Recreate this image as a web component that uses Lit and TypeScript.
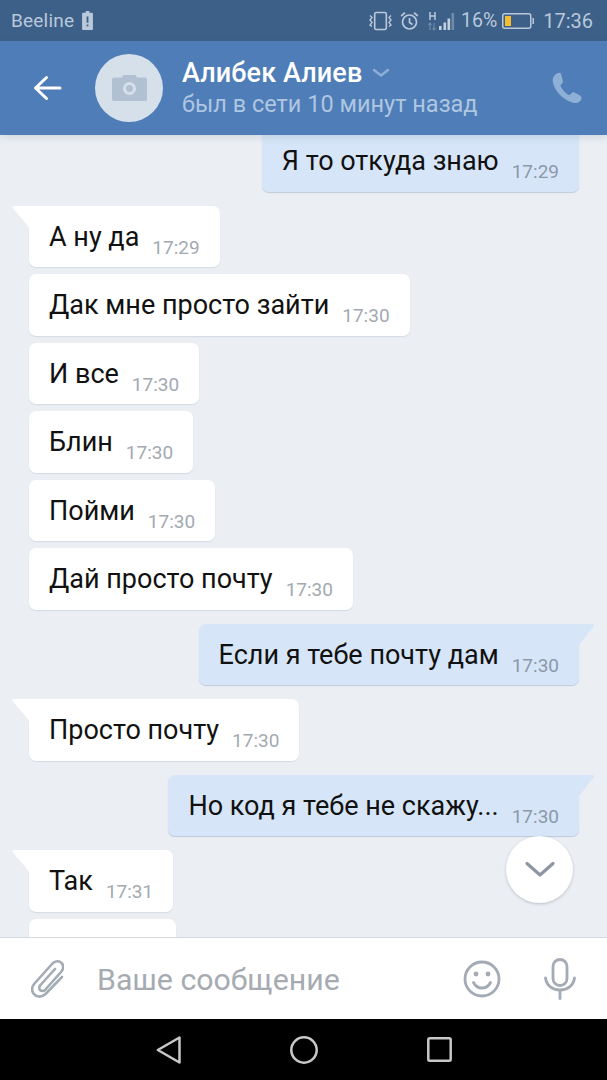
import { LitElement, html, css } from "lit";
import { customElement } from "lit/decorators.js";

type Msg = { text?: string; time?: string; out?: boolean; tail?: boolean; gap?: boolean };

const MSGS: Msg[] = [
  { text: "Я то откуда знаю", time: "17:29", out: true },
  { text: "А ну да", time: "17:29", tail: true, gap: true },
  { text: "Дак мне просто зайти", time: "17:30" },
  { text: "И все", time: "17:30" },
  { text: "Блин", time: "17:30" },
  { text: "Пойми", time: "17:30" },
  { text: "Дай просто почту", time: "17:30" },
  { text: "Если я тебе почту дам", time: "17:30", out: true, tail: true, gap: true },
  { text: "Просто почту", time: "17:30", tail: true, gap: true },
  { text: "Но код я тебе не скажу...", time: "17:30", out: true, tail: true, gap: true },
  { text: "Так", time: "17:31", tail: true, gap: true },
  {},
];

@customElement("app-root")
export class AppRoot extends LitElement {
  static styles = css`
    :host { display: block; width: 607px; height: 1080px; overflow: hidden; font-family: Roboto, "Noto Sans", sans-serif; }
    .page { display: flex; flex-direction: column; width: 607px; height: 1080px; background: #ebeff4; }
    .status { height: 41px; flex: none; background: #3d6089; color: #b9c8da; display: flex; align-items: center; padding: 0 14px 0 11px; position: relative; z-index: 2; }
    .carrier { font-size: 19px; letter-spacing: 0.2px; }
    .status svg { display: block; flex: none; }
    .warn { margin-left: 8px; }
    .spacer { flex: 1; }
    .vib { margin-right: 7px; }
    .alarm { margin-right: 8px; }
    .sig { margin-right: 5px; }
    .pct { font-size: 19.5px; margin-right: 5px; }
    .batt { margin-right: 9px; }
    .clock { font-size: 20px; }
    .header { height: 94px; flex: none; background: #4e7db7; display: flex; align-items: center; position: relative; z-index: 2; box-shadow: 0 2px 8px rgba(60, 80, 110, 0.16); }
    .back { margin-left: 33px; margin-right: 33px; display: block; flex: none; }
    .avatar { width: 68px; height: 68px; border-radius: 50%; background: #d6e0ea; display: flex; align-items: center; justify-content: center; flex: none; margin-right: 19px; }
    .who { flex: 1; min-width: 0; }
    .name { color: #fff; font-size: 27px; font-weight: 500; line-height: 30px; display: flex; align-items: center; gap: 10px; letter-spacing: 0.1px; }
    .sub { color: #afc6e2; font-size: 23.5px; line-height: 30px; margin-top: 1px; }
    .phone { margin-right: 23px; display: block; flex: none; }
    .list { flex: 1; min-height: 0; overflow: hidden; position: relative; display: flex; flex-direction: column; }
    .track { margin-top: -4.8px; display: flex; flex-direction: column; padding: 0 28px 0 29px; }
    .row { display: flex; margin-top: 7px; flex: none; }
    .row:first-child { margin-top: 0; }
    .row.gap { margin-top: 14px; }
    .row.out { justify-content: flex-end; }
    .bubble { position: relative; height: 61.5px; box-sizing: border-box; display: flex; align-items: flex-start; background: #fff; border-radius: 7px; box-shadow: 0 1px 1px rgba(90, 110, 140, 0.16); padding: 0 20px; color: #111; }
    .bubble.stub { width: 147px; }
    .out .bubble { background: #d6e6f8; box-shadow: 0 1px 1px rgba(90, 120, 160, 0.3); }
    .tail-b { border-top-left-radius: 0; }
    .out .tail-b { border-top-left-radius: 7px; border-top-right-radius: 0; }
    .text { font-size: 27px; line-height: 30px; padding-top: 16px; white-space: nowrap; }
    .time { font-size: 19px; line-height: 22px; color: #a3a9b1; margin-left: 13px; padding-top: 31px; white-space: nowrap; }
    .out .time { color: #8b99aa; }
    .tail { position: absolute; top: 0; left: -17px; display: block; }
    .out .tail { left: auto; right: -16px; }
    .fab { position: absolute; left: 506px; top: 701px; width: 67px; height: 67px; border-radius: 50%; background: #fff; box-shadow: 0 1px 3px rgba(60, 70, 90, 0.28); display: flex; align-items: center; justify-content: center; }
    .input { height: 82px; box-sizing: border-box; flex: none; background: #fff; border-top: 1px solid #d7dbe0; display: flex; align-items: center; position: relative; }
    .clip { margin-left: 31px; margin-right: 33px; display: block; flex: none; }
    .ph { flex: 1; font-size: 30.3px; color: #a6abb2; white-space: nowrap; padding-top: 2px; }
    .smile { margin-right: 43px; display: block; flex: none; }
    .mic { margin-right: 31px; display: block; flex: none; }
    .nav { height: 61px; flex: none; background: #000; display: flex; align-items: center; justify-content: center; gap: 109px; }
    .nav svg { display: block; flex: none; }
  `;

  private tail(out: boolean) {
    return out
      ? html`<svg class="tail" width="17" height="28" viewBox="0 0 17 28"><path d="M0 0H14.5C16 0 16.6 1 15.8 2.2L3 18.5C1.2 21 0 23 0 26Z" fill="#d6e6f8"/></svg>`
      : html`<svg class="tail" width="18" height="28" viewBox="0 0 18 28"><path d="M18 0H2C.6 0 0 1 .9 2.2L13.5 17C15.8 19.8 17.2 22 18 26Z" fill="#fff"/></svg>`;
  }

  render() {
    return html`
      <div class="page">
        <div class="status">
          <span class="carrier">Beeline</span>
          <svg class="warn" width="11" height="19" viewBox="0 0 12 21">
            <path d="M4 0h4v2h3a1 1 0 0 1 1 1v17a1 1 0 0 1-1 1H1a1 1 0 0 1-1-1V3a1 1 0 0 1 1-1h3z" fill="#b9c8da"/>
            <rect x="5" y="6" width="2" height="7" fill="#3d6089"/><rect x="5" y="15" width="2" height="2" fill="#3d6089"/>
          </svg>
          <span class="spacer"></span>
          <svg class="vib" width="25" height="20" viewBox="0 0 25 20" fill="none" stroke="#b9c8da">
            <rect x="6.7" y="1.5" width="11.6" height="17" rx="1.5" stroke-width="1.6"/>
            <path d="M2 4.5l2 2-2 2.5 2 2.5-2 2.5 2 1.5M23 4.5l-2 2 2 2.5-2 2.5 2 2.5-2 1.5" stroke-width="1.4"/>
          </svg>
          <svg class="alarm" width="19" height="20" viewBox="0 0 19 20" fill="none" stroke="#b9c8da">
            <circle cx="9.5" cy="11" r="7" stroke-width="1.7"/>
            <path d="M9.5 7v4.5l3 2M1.2 5L5 1.6M17.8 5L14 1.6" stroke-width="1.7"/>
          </svg>
          <svg class="sig" width="29" height="20" viewBox="0 0 29 20">
            <rect x="12" y="15" width="2.6" height="4" fill="#c4d0de"/><rect x="16.5" y="11.5" width="2.6" height="7.5" fill="#c4d0de"/>
            <rect x="20.5" y="7.5" width="2.6" height="11.5" fill="#c4d0de"/>
            <rect x="24.5" y="2" width="2.6" height="17" fill="#6f8aaa"/>
            <path d="M3 1v8M8 1v8M3 5h5" stroke="#b9c8da" stroke-width="1.5" fill="none"/>
            <path d="M3 12v7M7 12v7M1.5 14L3 12l1.5 2M5.5 17l1.5 2 1.5-2" stroke="#6f8aaa" stroke-width="1.2" fill="none"/>
          </svg>
          <span class="pct">16%</span>
          <svg class="batt" width="32" height="16" viewBox="0 0 32 16">
            <rect x=".75" y=".75" width="28" height="14.5" rx="2" fill="none" stroke="#b9c8da" stroke-width="1.5"/>
            <rect x="3" y="3" width="6" height="10" fill="#f6bd2e"/>
            <rect x="30.5" y="5" width="1.5" height="6" fill="#b9c8da"/>
          </svg>
          <span class="clock">17:36</span>
        </div>
        <div class="header">
          <svg class="back" width="29" height="26" viewBox="0 0 29 26" fill="none" stroke="#fff" stroke-width="3" stroke-linecap="round" stroke-linejoin="round">
            <path d="M27 13H3M13.5 2.5L2.5 13l11 10.5"/>
          </svg>
          <div class="avatar">
            <svg width="35" height="26" viewBox="0 0 35 26">
              <path fill-rule="evenodd" d="M10 2.5L11.5 0h12L25 2.5h8a2 2 0 0 1 2 2V24a2 2 0 0 1-2 2H2a2 2 0 0 1-2-2V4.5a2 2 0 0 1 2-2zM17.5 7a6.5 6.5 0 1 0 0 13 6.5 6.5 0 0 0 0-13zM17.5 10a3.500 3.500 0 1 1 0 7 3.500 3.500 0 0 1 0-7z" fill="#b1c1d2"/>
            </svg>
          </div>
          <div class="who">
            <div class="name">Алибек Алиев
              <svg width="18" height="10" viewBox="0 0 18 10" fill="none" stroke="#8fb0d6" stroke-width="2.4" stroke-linecap="round" stroke-linejoin="round"><path d="M2 2l7 5.5L16 2"/></svg>
            </div>
            <div class="sub">был в сети 10 минут назад</div>
          </div>
          <svg class="phone" width="34" height="34" viewBox="0 0 24 24">
            <path d="M6.6 1.2C5 1.4 2.4 3 2 5.5c-.4 3 1.200 7 4.500 10.800 3.500 3.800 7.500 6 11 6.300 2.500.2 4.400-1.600 4.700-3.100.2-1-.2-1.700-1-2.200l-3.600-2c-.9-.5-1.700-.3-2.400.4l-1.500 1.500c-2.600-1.300-5.300-4.300-6.400-7l1.300-1.500c.6-.7.7-1.500.3-2.300L7.800 2c-.3-.6-.7-.9-1.200-.8z" fill="#8fb0d6"/>
          </svg>
        </div>
        <div class="list">
          <div class="track">
            ${MSGS.map(
              (m) => html`
                <div class="row ${m.out ? "out" : ""} ${m.gap ? "gap" : ""}">
                  <div class="bubble ${m.tail ? "tail-b" : ""} ${m.text ? "" : "stub"}">
                    ${m.tail ? this.tail(!!m.out) : ""}
                    ${m.text ? html`<span class="text">${m.text}</span><span class="time">${m.time}</span>` : ""}
                  </div>
                </div>
              `
            )}
          </div>
          <div class="fab">
            <svg width="30" height="18" viewBox="0 0 30 18" fill="none" stroke="#8d97a4" stroke-width="3.2" stroke-linecap="round" stroke-linejoin="round"><path d="M2 2.5L15 14 28 2.5"/></svg>
          </div>
        </div>
        <div class="input">
          <svg class="clip" width="33" height="38" viewBox="0 0 33 38" fill="none" stroke="#a3abb5" stroke-width="2.6" stroke-linecap="round" stroke-linejoin="round">
            <path d="M31 17L14.500 34C10 38 5 37 2.500 33.500C.5 30.500 1 26.500 3.500 23.500L21.500 3.500C24.500 .5 28.500 .8 30.500 3C33 5.500 32.500 9 30 12L14 30C12.500 31.500 10 31 9 30C8 29 8 26.500 9.500 25L24 9"/>
          </svg>
          <span class="ph">Ваше сообщение</span>
          <svg class="smile" width="38" height="38" viewBox="0 0 38 38" fill="none" stroke="#a3abb5" stroke-width="2.8">
            <circle cx="19" cy="19" r="17"/>
            <path d="M10.500 22.500c2 4 5 5.500 8.500 5.500s6.500-1.500 8.500-5.500" stroke-linecap="round"/>
            <circle cx="13" cy="14" r="2.4" fill="#a3abb5" stroke="none"/><circle cx="25" cy="14" r="2.4" fill="#a3abb5" stroke="none"/>
          </svg>
          <svg class="mic" width="32" height="42" viewBox="0 0 32 42" fill="none" stroke="#a3abb5" stroke-width="2.8" stroke-linecap="round">
            <rect x="9" y="1.5" width="14" height="26" rx="7"/>
            <path d="M1.500 20c1 7.500 7 12 14.500 12s13.500-4.500 14.500-12M16 32v8.500"/>
          </svg>
        </div>
        <div class="nav">
          <svg width="25" height="28" viewBox="0 0 25 28" fill="none" stroke="#c8c8c8" stroke-width="2.5" stroke-linejoin="round"><path d="M23.500 1.500v25L1.800 14z"/></svg>
          <svg width="28" height="28" viewBox="0 0 28 28" fill="none" stroke="#c8c8c8" stroke-width="2.5"><circle cx="14" cy="14" r="12.700"/></svg>
          <svg width="25" height="25" viewBox="0 0 25 25" fill="none" stroke="#c8c8c8" stroke-width="2.5" stroke-linejoin="round"><rect x="1.300" y="1.300" width="22.400" height="22.400" rx="1.500"/></svg>
        </div>
      </div>
    `;
  }
}
